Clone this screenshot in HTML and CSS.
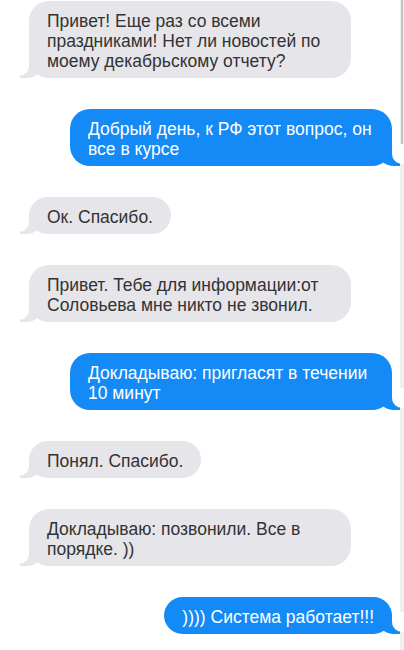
FILE: index.html
```
<!DOCTYPE html>
<html lang="ru">
<head>
    <meta charset="UTF-8">
    <title>Переписка</title>
    <link rel="stylesheet" href="styles.css">
</head>
<body>
    <main class="chat">
        <p class="msg msg-in">Привет! Еще раз со всеми праздниками! Нет ли новостей по моему декабрьскому отчету?</p>
        <p class="msg msg-out">Добрый день, к РФ этот вопрос, он все в курсе</p>
        <p class="msg msg-in">Ок. Спасибо.</p>
        <p class="msg msg-in">Привет. Тебе для информации:от Соловьева мне никто не звонил.</p>
        <p class="msg msg-out">Докладываю: пригласят в течении 10 минут</p>
        <p class="msg msg-in">Понял. Спасибо.</p>
        <p class="msg msg-in">Докладываю: позвонили. Все в порядке. ))</p>
        <p class="msg msg-out">)))) Система работает!!!</p>
    </main>
    <div class="scrollbar"><div class="scrollbar-thumb"></div></div>
</body>
</html>
```
FILE: styles.css
```
body {
    margin: 0;
    background: #fff;
    font-family: 'Liberation Sans', Arial, sans-serif;
    font-size: 17.5px;
    line-height: 20px;
}

.chat {
    display: flex;
    flex-direction: column;
    align-items: flex-start;
    gap: 31px;
    padding: 1px 12px 40px 29px;
}

.msg {
    position: relative;
    margin: 0;
    max-width: 322px;
    box-sizing: border-box;
    padding: 10px 18px 7px;
    border-radius: 20px;
}

.msg::before,
.msg::after {
    content: "";
    position: absolute;
    height: 20px;
}

.msg-in {
    background: #e5e5ea;
    color: #333;
}

.msg-in::before {
    bottom: 0;
    left: -9px;
    width: 22px;
    background: #e5e5ea;
    border-bottom-right-radius: 16px 14px;
    z-index: 0;
}

.msg-in::after {
    bottom: 2px;
    left: -26px;
    width: 26px;
    background: #fff;
    border-bottom-right-radius: 10px;
    z-index: 1;
}

.msg-out {
    align-self: flex-end;
    background: #148af7;
    color: #fff;
}

.msg-out::before {
    bottom: 0;
    right: -8px;
    width: 22px;
    background: #148af7;
    border-bottom-left-radius: 16px 14px;
    z-index: 0;
}

.msg-out::after {
    bottom: 2px;
    right: -26px;
    width: 26px;
    background: #fff;
    border-bottom-left-radius: 10px;
    z-index: 1;
}

/* page scrollbar as it shows in the screenshot */
.scrollbar {
    position: fixed;
    top: 0;
    right: 0;
    bottom: 0;
    width: 4px;
    background: #f0f0f0;
}

.scrollbar-thumb {
    margin: 0 1px 0 1px;
    height: 154px;
    background: #c2c2c2;
}
```
